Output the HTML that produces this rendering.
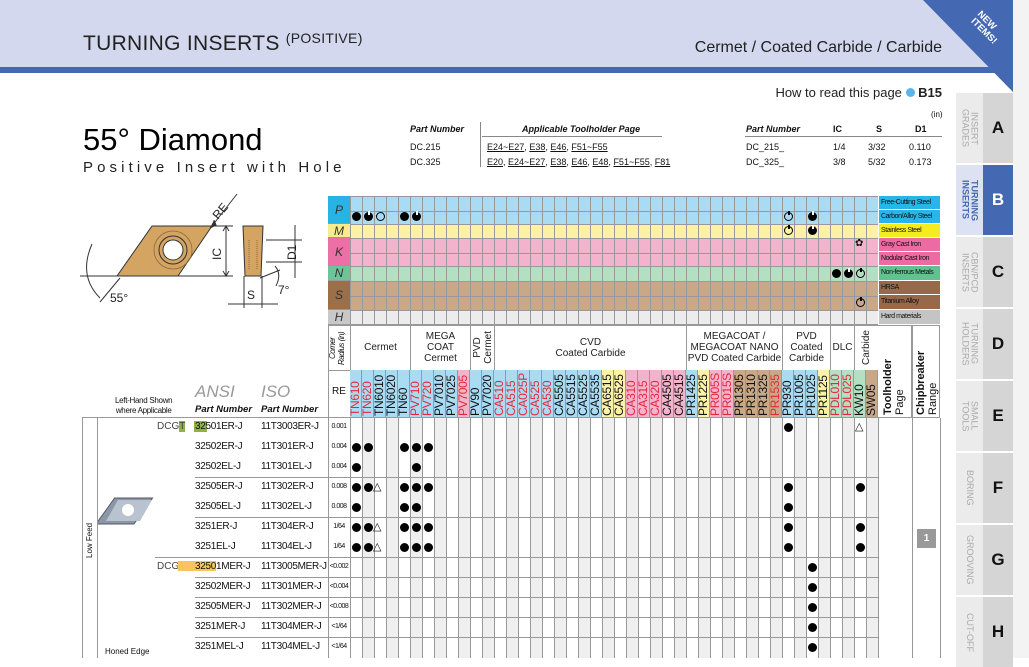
<!DOCTYPE html>
<html><head><meta charset="utf-8"><style>
*{margin:0;padding:0;box-sizing:border-box}
body{width:1029px;height:658px;overflow:hidden;background:#fff;font-family:"Liberation Sans",sans-serif;position:relative;color:#111}
.a{position:absolute}
.mr{position:absolute;left:350px;width:528px;background-image:repeating-linear-gradient(90deg,#999 0 1px,transparent 1px 12px)}
.lab{position:absolute;left:328px;width:22px;font-style:italic;font-size:12px;text-align:center;color:#333;border-bottom:1px solid #999}
.lg{position:absolute;left:879px;width:61px;height:14px;font-size:7px;letter-spacing:-.4px;line-height:14px;padding-left:2px;border-bottom:1px solid #fff;color:#111}
.gr{position:absolute;left:350px;top:370px;display:flex;height:48px}
.gr div{width:12px;height:48px;border-left:1px solid #999;writing-mode:vertical-rl;transform:rotate(180deg);font-size:12px;line-height:11px;padding-top:2px;letter-spacing:-.3px}
.b{background:#a9dcf3}.y{background:#fbf2a6}.k{background:#f4b3cd}.t{background:#c8a886}.g{background:#b3dfc3}.r{color:#e2283a}
.d{position:absolute;width:9px;height:9px;border-radius:50%;background:#000}
.h{position:absolute;width:9px;height:9px;border-radius:50%;background:#000}
.h:after{content:"";position:absolute;left:3.5px;top:-1px;width:2px;height:4px;background:inherit;filter:invert(1)}
.o{position:absolute;width:9px;height:9px;border-radius:50%;border:1px solid #000}
.c{position:absolute;width:9px;height:9px;border-radius:50%;border:1px solid #000}
.c:after{content:"";position:absolute;left:2.5px;top:-2px;width:2px;height:4px;background:#000}
.tr{position:absolute;font-size:11px;line-height:10px}
.grp{position:absolute;top:325px;height:45px;border-left:1px solid #999;font-size:10px;text-align:center;display:flex;align-items:center;justify-content:center;line-height:11px;color:#222}
.row{position:absolute;font-size:10px;letter-spacing:-.3px;color:#111}
.re{position:absolute;left:328px;width:22px;font-size:7px;text-align:center;letter-spacing:-.5px}
.hl{position:absolute;height:1px;background:#999}
.tab{position:absolute;left:956px;width:57px;height:70px}
.tab .tx{position:absolute;left:0;top:0;width:27px;height:70px;background:#ebebeb;writing-mode:vertical-rl;font-size:9px;color:#aaa;line-height:9px;display:flex;align-items:center;justify-content:center;text-align:center}
.tab .lt{position:absolute;left:27px;top:0;width:30px;height:70px;background:#d5d5d5;font-weight:bold;font-size:17px;display:flex;align-items:center;justify-content:center}
u{text-decoration:underline}
</style></head><body>
<div class="a" style="left:0;top:0;width:1013px;height:67px;background:#d3d8ee"></div>
<div class="a" style="left:0;top:67px;width:1013px;height:6px;background:#4468b2"></div>
<div class="a" style="left:1013px;top:0;width:16px;height:658px;background:#f3f3f3"></div>
<svg class="a" style="left:920px;top:0" width="93" height="92"><polygon points="3,0 93,0 93,92" fill="#4468b2"/><text x="60" y="22" fill="#fff" font-size="9.5" font-weight="bold" font-family="Liberation Sans" transform="rotate(45 62 28)" text-anchor="middle">NEW</text><text x="62" y="33" fill="#fff" font-size="9.5" font-weight="bold" font-family="Liberation Sans" transform="rotate(45 62 33)" text-anchor="middle">ITEMS!</text></svg>
<div class="a" style="left:83px;top:32px;font-size:21px;color:#222;letter-spacing:.3px">TURNING INSERTS <span style="font-size:14px;position:relative;top:-7px">(POSITIVE)</span></div>
<div class="a" style="right:87px;top:39px;font-size:16px;color:#222">Cermet / Coated Carbide / Carbide</div>
<div class="a" style="right:87px;top:85px;font-size:13px;color:#222">How to read this page <span style="display:inline-block;width:9px;height:9px;border-radius:50%;background:#5ab6e8;vertical-align:0"></span> <b>B15</b></div>
<div class="a" style="left:83px;top:122px;font-size:31px;font-weight:500;color:#000">55° Diamond</div>
<div class="a" style="left:83px;top:159px;font-size:15px;letter-spacing:4.1px;color:#222">Positive Insert with Hole</div>
<div class="a" style="left:410px;top:124px;font-size:9px;font-style:italic;font-weight:bold">Part Number</div>
<div class="a" style="left:522px;top:124px;font-size:9px;font-style:italic;font-weight:bold">Applicable Toolholder Page</div>
<div class="a" style="left:480px;top:122px;width:1px;height:45px;background:#888"></div>
<div class="a" style="left:482px;top:136px;width:180px;height:1px;background:#888"></div>
<div class="a" style="left:410px;top:140px;font-size:9px;line-height:15px">DC.215<br>DC.325</div>
<div class="a" style="left:487px;top:140px;font-size:9px;line-height:15px"><u>E24~E27</u>, <u>E38</u>, <u>E46</u>, <u>F51~F55</u><br><u>E20</u>, <u>E24~E27</u>, <u>E38</u>, <u>E46</u>, <u>E48</u>, <u>F51~F55</u>, <u>F81</u></div>
<div class="a" style="left:931px;top:110px;font-size:8px">(in)</div>
<div class="a" style="left:746px;top:124px;font-size:9px;font-style:italic;font-weight:bold">Part Number</div>
<div class="a" style="left:833px;top:124px;font-size:9px;font-weight:bold">IC</div>
<div class="a" style="left:876px;top:124px;font-size:9px;font-weight:bold">S</div>
<div class="a" style="left:915px;top:124px;font-size:9px;font-weight:bold">D1</div>
<div class="a" style="left:745px;top:136px;width:197px;height:1px;background:#888"></div>
<div class="a" style="left:746px;top:140px;font-size:9px;line-height:15px">DC_215_<br>DC_325_</div>
<div class="a" style="left:833px;top:140px;font-size:9px;line-height:15px">1/4<br>3/8</div>
<div class="a" style="left:868px;top:140px;font-size:9px;line-height:15px">3/32<br>5/32</div>
<div class="a" style="left:909px;top:140px;font-size:9px;line-height:15px">0.110<br>0.173</div>
<svg class="a" style="left:70px;top:180px" width="260" height="130" font-family="Liberation Sans">
<line x1="10" y1="96" x2="48" y2="96" stroke="#333"/>
<polygon points="82,46 142,46 108,96 47,96" fill="#d4a463" stroke="#333"/>
<circle cx="103" cy="70" r="19" fill="none" stroke="#8a6a3a" stroke-width=".8"/>
<circle cx="103" cy="70" r="14" fill="#d4a463" stroke="#333"/>
<circle cx="103" cy="70" r="10" fill="#fff" stroke="#333"/>
<line x1="142" y1="46" x2="163" y2="46" stroke="#333"/><line x1="108" y1="96" x2="163" y2="96" stroke="#333"/>
<line x1="156" y1="47" x2="156" y2="95" stroke="#333"/><path d="M153,51 L156,46 159,51M153,91 L156,96 159,91" fill="none" stroke="#333"/>
<text x="151" y="80" font-size="12" transform="rotate(-90 151 80)" fill="#222">IC</text>
<line x1="142" y1="46" x2="167" y2="14" stroke="#333"/><path d="M140,48 L146,45 144,40" stroke="#333" fill="#333"/>
<text x="148" y="40" font-size="12" transform="rotate(-50 148 40)" fill="#222">RE</text>
<polygon points="173,46 193,46 191,96 175,96" fill="#d4a463" stroke="#333"/>
<path d="M179,60 L179,90 M187,60 L187,90" stroke="#8a6a3a" stroke-dasharray="1 1"/>
<line x1="196" y1="60" x2="232" y2="60" stroke="#333"/><line x1="196" y1="82" x2="232" y2="82" stroke="#333"/>
<line x1="225" y1="45" x2="225" y2="98" stroke="#333"/>
<text x="226" y="80" font-size="12" transform="rotate(-90 226 80)" fill="#222">D1</text>
<line x1="174" y1="96" x2="174" y2="128" stroke="#333"/><line x1="192" y1="96" x2="192" y2="128" stroke="#333"/>
<line x1="158" y1="124" x2="208" y2="124" stroke="#333"/>
<text x="177" y="119" font-size="12" fill="#222">S</text>
<path d="M190,98 L210,90 M205,86 Q212,94 206,106" fill="none" stroke="#333"/>
<text x="208" y="114" font-size="12" fill="#222">7°</text>
<path d="M22,64 Q8,96 30,118" fill="none" stroke="#333"/><line x1="50" y1="98" x2="30" y2="122" stroke="#333"/>
<text x="40" y="122" font-size="12" fill="#222">55°</text>
</svg>
<div class="mr" style="top:196px;height:28px;background-color:#a9dcf3;border-top:1px solid #999"><div class="hl" style="left:0;top:14px;width:528px"></div></div>
<div class="mr" style="top:224px;height:14px;background-color:#fbf2a6;border-top:1px solid #999"></div>
<div class="mr" style="top:238px;height:28px;background-color:#f4b3cd;border-top:1px solid #999"><div class="hl" style="left:0;top:14px;width:528px"></div></div>
<div class="mr" style="top:266px;height:15px;background-color:#b3dfc3;border-top:1px solid #999"></div>
<div class="mr" style="top:281px;height:29px;background-color:#c8a886;border-top:1px solid #999"><div class="hl" style="left:0;top:14px;width:528px"></div></div>
<div class="mr" style="top:310px;height:15px;background-color:#ececec;border-top:1px solid #999;border-bottom:1px solid #999"></div>
<div class="lab" style="top:196px;height:28px;line-height:28px;background:#27b3e6">P</div>
<div class="lab" style="top:224px;height:14px;line-height:14px;background:#f6ec8e">M</div>
<div class="lab" style="top:238px;height:28px;line-height:28px;background:#ec6fa6">K</div>
<div class="lab" style="top:266px;height:15px;line-height:15px;background:#6cc497">N</div>
<div class="lab" style="top:281px;height:29px;line-height:29px;background:#9b7048">S</div>
<div class="lab" style="top:310px;height:15px;line-height:15px;background:#c8c8c8">H</div>
<div class="lg" style="top:196px;background:#29b5e8">Free-Cutting Steel</div>
<div class="lg" style="top:210px;background:#29b5e8">Carbon/Alloy Steel</div>
<div class="lg" style="top:224px;background:#f5ec20">Stainless Steel</div>
<div class="lg" style="top:238px;background:#ec6ba3">Gray Cast Iron</div>
<div class="lg" style="top:252px;background:#ec6ba3">Nodular Cast Iron</div>
<div class="lg" style="top:266px;height:15px;background:#5fc28f">Non-ferrous Metals</div>
<div class="lg" style="top:281px;background:#97694a">HRSA</div>
<div class="lg" style="top:295px;height:15px;background:#97694a">Titanium Alloy</div>
<div class="lg" style="top:310px;height:15px;background:#c4c4c4">Hard materials</div>
<i class="d" style="left:352px;top:212px"></i><i class="h" style="left:364px;top:212px"></i><i class="o" style="left:376px;top:212px"></i><i class="d" style="left:400px;top:212px"></i><i class="h" style="left:412px;top:212px"></i>
<i class="c" style="left:784px;top:212px"></i><i class="h" style="left:808px;top:212px"></i>
<i class="c" style="left:784px;top:226px"></i><i class="h" style="left:808px;top:226px"></i>
<div class="a" style="left:855px;top:238px;font-size:10px">✿</div>
<i class="d" style="left:832px;top:269px"></i><i class="h" style="left:844px;top:269px"></i><i class="c" style="left:856px;top:269px"></i>
<i class="c" style="left:856px;top:298px"></i>
<div class="a" style="left:328px;top:325px;width:612px;height:93px;border-top:1px solid #999"></div>
<div class="a" style="left:328px;top:326px;width:22px;height:44px;writing-mode:vertical-rl;transform:rotate(180deg);font-size:8px;line-height:9px;text-align:center;letter-spacing:-.5px;font-style:italic">Corner Radius (in)</div>
<div class="grp" style="left:350px;width:60px">Cermet</div>
<div class="grp" style="left:410px;width:60px">MEGA<br>COAT<br>Cermet</div>
<div class="grp" style="left:470px;width:24px"><span style="writing-mode:vertical-rl;transform:rotate(180deg)">PVD<br>Cermet</span></div>
<div class="grp" style="left:494px;width:192px">CVD<br>Coated Carbide</div>
<div class="grp" style="left:686px;width:96px">MEGACOAT /<br>MEGACOAT NANO<br>PVD Coated Carbide</div>
<div class="grp" style="left:782px;width:48px">PVD<br>Coated<br>Carbide</div>
<div class="grp" style="left:830px;width:24px">DLC</div>
<div class="grp" style="left:854px;width:24px"><span style="writing-mode:vertical-rl;transform:rotate(180deg)">Carbide</span></div>
<div class="a" style="left:878px;top:325px;width:34px;height:93px;border-left:1px solid #999;writing-mode:vertical-rl;transform:rotate(180deg);font-size:11px;line-height:12px;padding:3px 4px 0 0;text-align:left"><b>Toolholder</b><br>Page</div>
<div class="a" style="left:912px;top:325px;width:28px;height:93px;border-left:1px solid #999;border-right:1px solid #999;writing-mode:vertical-rl;transform:rotate(180deg);font-size:11px;line-height:12px;padding:3px 2px 0 0;text-align:left"><b>Chipbreaker</b><br>Range</div>
<div class="hl" style="left:328px;top:370px;width:550px"></div>
<div class="a" style="left:328px;top:386px;width:22px;font-size:10px;text-align:center">RE</div>
<div class="a" style="left:328px;top:325px;width:1px;height:333px;background:#999"></div>
<div class="gr">
<div class="b r">TN610</div><div class="b r">TN620</div><div class="b">TN6010</div><div class="b">TN6020</div><div class="b">TN60</div>
<div class="b r">PV710</div><div class="b r">PV720</div><div class="b">PV7010</div><div class="b">PV7025</div><div class="k r">PV7005</div>
<div class="b">PV90</div><div class="b">PV7020</div>
<div class="b r">CA510</div><div class="b r">CA515</div><div class="b r">CA025P</div><div class="b r">CA525</div><div class="b r">CA530</div><div class="b">CA5505</div><div class="b">CA5515</div><div class="b">CA5525</div><div class="b">CA5535</div><div class="y">CA6515</div><div class="y">CA6525</div><div class="k r">CA310</div><div class="k r">CA315</div><div class="k r">CA320</div><div class="k">CA4505</div><div class="k">CA4515</div>
<div class="b">PR1425</div><div class="y">PR1225</div><div class="k r">PR005S</div><div class="k r">PR015S</div><div class="t">PR1305</div><div class="t">PR1310</div><div class="t">PR1325</div><div class="t r">PR1535</div>
<div class="b">PR930</div><div class="b">PR1005</div><div class="b">PR1025</div><div class="y">PR1125</div>
<div class="g r">PDL010</div><div class="g r">PDL025</div><div class="g">KW10</div><div class="t">SW05</div>
</div>
<div class="a" style="left:350px;top:418px;width:528px;height:240px;background-image:repeating-linear-gradient(90deg,#999 0 1px,#fff 1px 12px,#999 12px 13px,#efefef 13px 24px)"></div>
<div class="a" style="left:878px;top:418px;width:1px;height:240px;background:#999"></div>
<div class="a" style="left:912px;top:418px;width:1px;height:240px;background:#999"></div>
<div class="a" style="left:940px;top:418px;width:1px;height:240px;background:#999"></div>
<div class="a" style="left:350px;top:418px;width:1px;height:240px;background:#999"></div>
<div class="hl" style="left:82px;top:417px;width:858px"></div>
<div class="hl" style="left:195px;top:477px;width:683px"></div>
<div class="hl" style="left:195px;top:517px;width:683px"></div>
<div class="hl" style="left:155px;top:557px;width:723px"></div>
<div class="hl" style="left:195px;top:577px;width:683px"></div>
<div class="hl" style="left:195px;top:597px;width:683px"></div>
<div class="hl" style="left:195px;top:617px;width:683px"></div>
<div class="hl" style="left:195px;top:637px;width:683px"></div>
<div class="a" style="left:82px;top:417px;width:1px;height:241px;background:#999"></div>
<div class="a" style="left:97px;top:417px;width:1px;height:241px;background:#999"></div>
<div class="a" style="left:82px;top:520px;width:15px;height:40px;writing-mode:vertical-rl;transform:rotate(180deg);font-size:8px;text-align:center;line-height:15px">Low Feed</div>
<svg class="a" style="left:98px;top:490px" width="62" height="40"><polygon points="18,8 56,8 42,34 4,34" fill="#8a97a6" stroke="#556" transform="skewX(-10)"/><polygon points="20,10 54,10 42,31 8,31" fill="#b8c3cf"/><circle cx="30" cy="20" r="6" fill="#fff"/></svg>
<div class="a" style="left:115px;top:396px;font-size:8px;line-height:10px;text-align:center;letter-spacing:-.3px">Left-Hand Shown<br>where Applicable</div>
<div class="a" style="left:195px;top:382px;font-size:17px;font-style:italic;color:#999">ANSI</div>
<div class="a" style="left:261px;top:382px;font-size:17px;font-style:italic;color:#999">ISO</div>
<div class="a" style="left:195px;top:404px;font-size:9.5px;font-style:italic;font-weight:bold">Part Number</div>
<div class="a" style="left:261px;top:404px;font-size:9.5px;font-style:italic;font-weight:bold">Part Number</div>
<div class="a" style="left:105px;top:647px;font-size:8px">Honed Edge</div>
<div class="a" style="left:157px;top:421px;font-size:10px;color:#444">DCG<span style="background:#8fb04a">T</span></div>
<div class="a" style="left:157px;top:561px;font-size:10px;color:#444">DCGT</div>
<div class="a" style="left:178px;top:561px;width:38px;height:10px;background:#f8c45e"></div>
<div class="a" style="left:194px;top:421px;width:13px;height:11px;background:#8fb04a"></div>
<div class="row" style="left:195px;top:421px">32501ER-J</div><div class="row" style="left:261px;top:421px">11T3003ER-J</div><div class="re" style="top:423px">0.001</div>
<div class="row" style="left:195px;top:441px">32502ER-J</div><div class="row" style="left:261px;top:441px">11T301ER-J</div><div class="re" style="top:443px">0.004</div>
<div class="row" style="left:195px;top:461px">32502EL-J</div><div class="row" style="left:261px;top:461px">11T301EL-J</div><div class="re" style="top:463px">0.004</div>
<div class="row" style="left:195px;top:481px">32505ER-J</div><div class="row" style="left:261px;top:481px">11T302ER-J</div><div class="re" style="top:483px">0.008</div>
<div class="row" style="left:195px;top:501px">32505EL-J</div><div class="row" style="left:261px;top:501px">11T302EL-J</div><div class="re" style="top:503px">0.008</div>
<div class="row" style="left:195px;top:521px">3251ER-J</div><div class="row" style="left:261px;top:521px">11T304ER-J</div><div class="re" style="top:523px">1/64</div>
<div class="row" style="left:195px;top:541px">3251EL-J</div><div class="row" style="left:261px;top:541px">11T304EL-J</div><div class="re" style="top:543px">1/64</div>
<div class="row" style="left:195px;top:561px">32501MER-J</div><div class="row" style="left:261px;top:561px">11T3005MER-J</div><div class="re" style="top:563px">&lt;0.002</div>
<div class="row" style="left:195px;top:581px">32502MER-J</div><div class="row" style="left:261px;top:581px">11T301MER-J</div><div class="re" style="top:583px">&lt;0.004</div>
<div class="row" style="left:195px;top:601px">32505MER-J</div><div class="row" style="left:261px;top:601px">11T302MER-J</div><div class="re" style="top:603px">&lt;0.008</div>
<div class="row" style="left:195px;top:621px">3251MER-J</div><div class="row" style="left:261px;top:621px">11T304MER-J</div><div class="re" style="top:623px">&lt;1/64</div>
<div class="row" style="left:195px;top:641px">3251MEL-J</div><div class="row" style="left:261px;top:641px">11T304MEL-J</div><div class="re" style="top:643px">&lt;1/64</div>
<i class="d" style="left:784px;top:423px"></i><span class="tr" style="left:855px;top:422px">△</span>
<i class="d" style="left:352px;top:443px"></i><i class="d" style="left:364px;top:443px"></i><i class="d" style="left:400px;top:443px"></i><i class="d" style="left:412px;top:443px"></i><i class="d" style="left:424px;top:443px"></i>
<i class="d" style="left:352px;top:463px"></i><i class="d" style="left:412px;top:463px"></i>
<i class="d" style="left:352px;top:483px"></i><i class="d" style="left:364px;top:483px"></i><span class="tr" style="left:373px;top:482px">△</span><i class="d" style="left:400px;top:483px"></i><i class="d" style="left:412px;top:483px"></i><i class="d" style="left:424px;top:483px"></i><i class="d" style="left:784px;top:483px"></i><i class="d" style="left:856px;top:483px"></i>
<i class="d" style="left:352px;top:503px"></i><i class="d" style="left:400px;top:503px"></i><i class="d" style="left:412px;top:503px"></i><i class="d" style="left:784px;top:503px"></i>
<i class="d" style="left:352px;top:523px"></i><i class="d" style="left:364px;top:523px"></i><span class="tr" style="left:373px;top:522px">△</span><i class="d" style="left:400px;top:523px"></i><i class="d" style="left:412px;top:523px"></i><i class="d" style="left:424px;top:523px"></i><i class="d" style="left:784px;top:523px"></i><i class="d" style="left:856px;top:523px"></i>
<i class="d" style="left:352px;top:543px"></i><i class="d" style="left:364px;top:543px"></i><span class="tr" style="left:373px;top:542px">△</span><i class="d" style="left:400px;top:543px"></i><i class="d" style="left:412px;top:543px"></i><i class="d" style="left:424px;top:543px"></i><i class="d" style="left:784px;top:543px"></i><i class="d" style="left:856px;top:543px"></i>
<i class="d" style="left:808px;top:563px"></i><i class="d" style="left:808px;top:583px"></i><i class="d" style="left:808px;top:603px"></i><i class="d" style="left:808px;top:623px"></i><i class="d" style="left:808px;top:643px"></i>
<div class="a" style="left:917px;top:529px;width:19px;height:19px;background:#999;color:#fff;font-size:10px;font-weight:bold;text-align:center;line-height:19px">1</div>
<div class="tab" style="top:93px"><div class="tx">INSERT<br>GRADES</div><div class="lt">A</div></div>
<div class="tab" style="top:165px"><div class="tx" style="background:#dde2f2;color:#4468b2;font-weight:bold">TURNING<br>INSERTS</div><div class="lt" style="background:#4468b2;color:#fff">B</div></div>
<div class="tab" style="top:237px"><div class="tx">CBN/PCD<br>INSERTS</div><div class="lt">C</div></div>
<div class="tab" style="top:309px"><div class="tx">TURNING<br>HOLDERS</div><div class="lt">D</div></div>
<div class="tab" style="top:381px"><div class="tx">SMALL<br>TOOLS</div><div class="lt">E</div></div>
<div class="tab" style="top:453px"><div class="tx">BORING</div><div class="lt">F</div></div>
<div class="tab" style="top:525px"><div class="tx">GROOVING</div><div class="lt">G</div></div>
<div class="tab" style="top:597px"><div class="tx">CUT-OFF</div><div class="lt">H</div></div>
</body></html>
